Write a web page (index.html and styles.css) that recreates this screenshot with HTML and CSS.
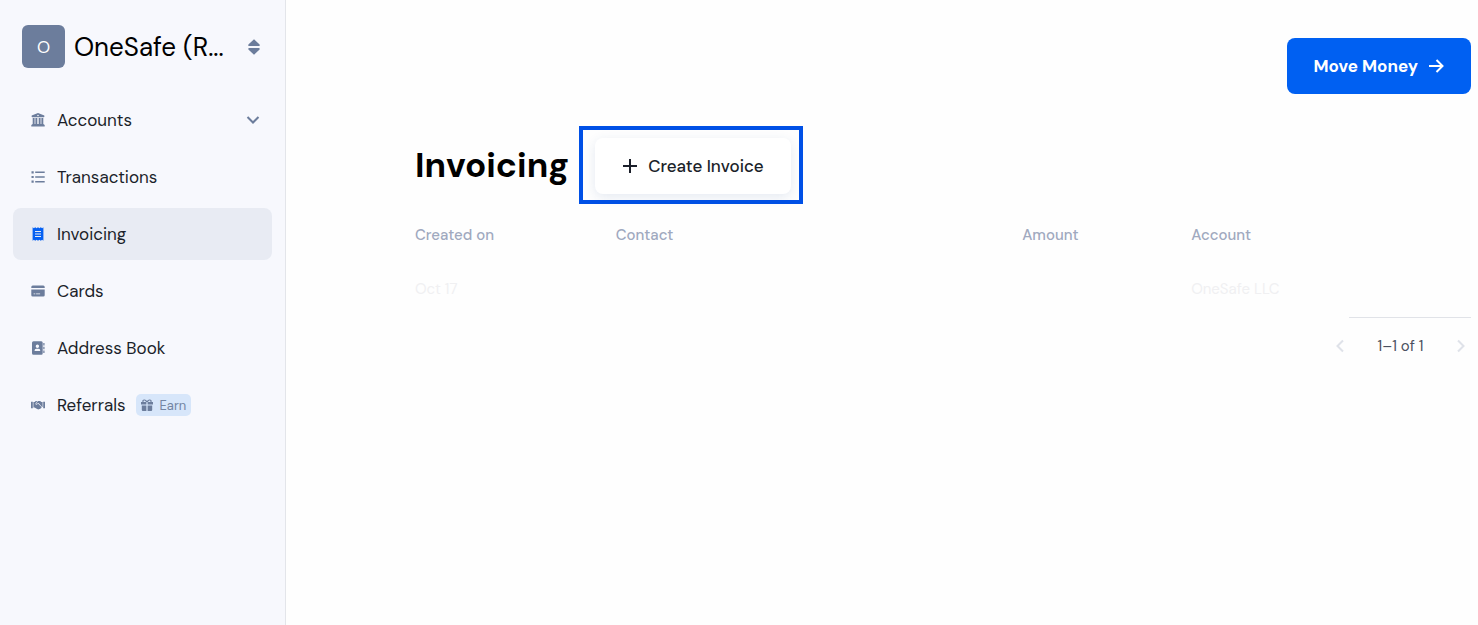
FILE: index.html
```html
<!DOCTYPE html>
<html lang="en">
<head>
    <meta charset="UTF-8">
    <meta name="viewport" content="width=device-width, initial-scale=1.0">
    <title>Invoicing - OneSafe</title>
    <link rel="stylesheet" href="styles.css">
</head>
<body>
    <div class="app">
        <aside class="sidebar">
            <button type="button" class="workspace">
                <span class="workspace-avatar">O</span>
                <span class="workspace-name">OneSafe (R...</span>
                <svg class="workspace-sort" viewBox="0 0 12 16" width="12" height="16" aria-hidden="true"><path d="M6 .3 11.6 5.4Q12.1 7 10.8 7H1.2Q-.1 7 .4 5.4ZM6 15.7 11.6 10.6Q12.1 9 10.8 9H1.2Q-.1 9 .4 10.6Z"/></svg>
            </button>

            <nav class="nav">
                <a href="#accounts" class="nav-link">
                    <svg class="nav-icon" viewBox="0 0 14 14" aria-hidden="true"><path fill-rule="evenodd" d="M7 0 13.3 2.6Q13.7 4.2 12.9 4.2H1.1Q.3 4.2.7 2.6ZM7 1.7a.8.8 0 1 0 0 1.6.8.8 0 0 0 0-1.6ZM1.7 5h1.9v6h.8V5h1.900v6h1.400V5h1.900v6h.8V5h1.900v6l1.400 1v1.500H.3V12l1.400-1Z"/></svg>
                    <span>Accounts</span>
                    <svg class="nav-chevron" viewBox="0 0 14 8" width="14" height="8" aria-hidden="true"><path d="m1.5 1 5.5 5.5L12.5 1"/></svg>
                </a>
                <a href="#transactions" class="nav-link">
                    <svg class="nav-icon" viewBox="0 0 14 14" aria-hidden="true"><path d="M.5 1.2h2.2v2.2H.5zM.5 5.9h2.2v2.2H.5zM.5 10.6h2.2v2.2H.5zM4.2 1.6h9.5v1.5H4.2zM4.2 6.3h9.5v1.5H4.2zM4.2 11h9.5v1.5H4.2z"/></svg>
                    <span>Transactions</span>
                </a>
                <a href="#invoicing" class="nav-link active" aria-current="page">
                    <svg class="nav-icon" viewBox="0 0 14 14" aria-hidden="true"><path fill-rule="evenodd" d="m1.6.3 1.3 1 1.3-1 1.4 1L7 .3l1.4 1 1.4-1 1.3 1 1.3-1v13.4l-1.3-1-1.3 1-1.4-1-1.4 1-1.4-1-1.4 1-1.3-1-1.3 1ZM4 4v.9h6V4Zm0 2.5v.9h6v-.9ZM4 9v.9h6V9Z"/></svg>
                    <span>Invoicing</span>
                </a>
                <a href="#cards" class="nav-link">
                    <svg class="nav-icon" viewBox="0 0 14 14" aria-hidden="true"><path fill-rule="evenodd" d="M1.7 1.6h10.6q1.4 0 1.4 1.5v.8H.3v-.8q0-1.5 1.4-1.5ZM.3 5.6h13.4v5.6q0 1.3-1.4 1.3H1.7q-1.4 0-1.4-1.3ZM2.6 9.4v.8h1.7v-.8Zm2.5 0v.8h4v-.8Z"/></svg>
                    <span>Cards</span>
                </a>
                <a href="#address-book" class="nav-link">
                    <svg class="nav-icon" viewBox="0 0 14 14" aria-hidden="true"><path fill-rule="evenodd" d="M2.5.3h7.8q1.4 0 1.4 1.5v10.4q0 1.5-1.4 1.5H2.5Q1 13.7 1 12.2V1.8Q1 .3 2.5.3ZM6.4 3.5a1.7 1.7 0 1 0 0 3.4 1.7 1.7 0 0 0 0-3.4ZM3.5 10h5.8q0-2.3-1.9-2.3h-2q-1.9 0-1.9 2.3ZM12.3 2h1.2v2.6h-1.2zM12.3 5.7h1.2v2.6h-1.2zM12.3 9.4h1.2V12h-1.2z"/></svg>
                    <span>Address Book</span>
                </a>
                <a href="#referrals" class="nav-link">
                    <svg class="nav-icon" viewBox="0 0 14 14" aria-hidden="true"><path d="M0 3.7h1.8v6.5H0zM12.2 3.7H14v6.5h-1.8zM2.4 4h1.2l1.2-.9h1.5L4.6 5.2q-.5 1.3.7 1.5L7.2 5.8l3.3 3.1q.3 1.1-.7 1.3-.5 1-1.3.8-1.3.9-2.3 0L3.5 9.4H2.4ZM7 3.1h2.1l1.3.9h1.2v5h-.5L7.5 5l-2 .9q-.6-.3-.1-1Z"/></svg>
                    <span>Referrals</span>
                    <span class="badge">
                        <svg viewBox="0 0 12 12" width="12" height="12" aria-hidden="true"><path fill-rule="evenodd" d="M1.5 3C.7 1.4 2 .2 3.5.4 4.7.5 5.4 1.3 6 2.1 6.6 1.3 7.3.5 8.5.4 10 .2 11.3 1.4 10.5 3H12v2.6H6.6V3H5.4v2.6H0V3Zm1.3 0h2.3C4.3 1.6 3.8 1.4 3.2 1.4c-.8.1-1 .9-.4 1.6Zm4.1 0h2.3c.6-.7.4-1.5-.4-1.6-.6 0-1.1.2-1.9 1.6ZM.8 6.5h4.6V12H1.9Q.8 12 .8 10.9Zm5.8 0h4.6v4.4q0 1.1-1.1 1.1H6.6Z"/></svg>
                        Earn
                    </span>
                </a>
            </nav>
        </aside>

        <main class="main">
            <div class="topbar">
                <button type="button" class="btn btn-primary">
                    Move Money
                    <svg viewBox="0 0 16 16" width="16" height="16" aria-hidden="true"><path d="M1 8h14M8.5 2l6 6-6 6"/></svg>
                </button>
            </div>

            <div class="page-header">
                <h1>Invoicing</h1>
                <div class="highlight">
                    <button type="button" class="btn btn-light">
                        <svg viewBox="0 0 16 16" width="16" height="16" aria-hidden="true"><path d="M8 1v14M1 8h14"/></svg>
                        Create Invoice
                    </button>
                </div>
            </div>

            <table class="invoices">
                <thead>
                    <tr>
                        <th class="col-date">Created on</th>
                        <th class="col-contact">Contact</th>
                        <th class="col-amount">Amount</th>
                        <th>Account</th>
                    </tr>
                </thead>
                <tbody>
                    <tr>
                        <td>Oct 17</td>
                        <td></td>
                        <td></td>
                        <td>OneSafe LLC</td>
                    </tr>
                </tbody>
            </table>

            <div class="table-footer">
                <hr class="divider">
                <div class="pagination">
                    <button type="button" class="page-btn" aria-label="Previous page">
                        <svg viewBox="0 0 8 14" width="8" height="14" aria-hidden="true"><path d="M7 1.5 1.5 7 7 12.5"/></svg>
                    </button>
                    <span>1–1 of 1</span>
                    <button type="button" class="page-btn" aria-label="Next page">
                        <svg viewBox="0 0 8 14" width="8" height="14" aria-hidden="true"><path d="M1 1.5 6.5 7 1 12.5"/></svg>
                    </button>
                </div>
            </div>
        </main>
    </div>
</body>
</html>
```
FILE: styles.css
```css
* {
    margin: 0;
    padding: 0;
    box-sizing: border-box;
}

body {
    font-family: 'DM Sans', Inter, sans-serif;
    font-size: 17px;
    color: #1b1f2a;
    background: #fefefe;
}

button {
    font: inherit;
    border: none;
    background: none;
    cursor: pointer;
}

.app {
    display: flex;
    min-height: 100vh;
}

/* Sidebar */
.sidebar {
    flex: 0 0 286px;
    padding: 24px 13px;
    background: #f7f8fd;
    border-right: 1px solid #e3e5ea;
}

.workspace {
    display: flex;
    align-items: center;
    width: 100%;
    padding: 1px 12px 0 9px;
    margin-bottom: 26px;
    text-align: left;
}

.workspace-avatar {
    display: flex;
    align-items: center;
    justify-content: center;
    width: 43px;
    height: 43px;
    margin-right: 9px;
    border-radius: 6px;
    background: #6c7d9c;
    color: white;
    font-size: 17px;
}

.workspace-name {
    flex: 1;
    font-size: 26px;
    line-height: 32px;
    color: black;
    white-space: nowrap;
}

.workspace-sort {
    fill: #6c7d9c;
}

.nav {
    display: flex;
    flex-direction: column;
    gap: 5px;
}

.nav-link {
    display: flex;
    align-items: center;
    height: 52px;
    padding: 0 12px 0 18px;
    border-radius: 8px;
    color: #1b1f2a;
    text-decoration: none;
}

.nav-link.active {
    background: #e8ebf3;
}

.nav-icon {
    width: 14px;
    height: 14px;
    margin-right: 12px;
    fill: #6c7d9c;
}

.active .nav-icon {
    fill: #0560f2;
}

.nav-chevron {
    margin-left: auto;
    fill: none;
    stroke: #6c7d9c;
    stroke-width: 2;
}

.badge {
    display: flex;
    align-items: center;
    gap: 7px;
    height: 22px;
    margin-left: 10px;
    padding: 0 5px;
    border-radius: 5px;
    background: #d7e6fa;
    color: #7485a3;
    font-size: 13px;
}

.badge svg {
    fill: #6c7d9c;
}

/* Main content */
.main {
    flex: 1;
    min-width: 0;
    padding: 38px 7px 24px 129px;
}

.topbar {
    display: flex;
    justify-content: flex-end;
    margin-bottom: 32px;
}

.btn {
    display: flex;
    align-items: center;
    gap: 10px;
    height: 56px;
    padding: 0 27px;
    border-radius: 8px;
}

.btn svg {
    fill: none;
    stroke: currentColor;
    stroke-width: 2;
}

.btn-primary {
    background: #0060f2;
    color: white;
    font-weight: 700;
}

.btn-light {
    background: white;
    color: #1b1f2a;
    font-weight: 500;
    box-shadow: 0 3px 12px rgba(40, 80, 150, 0.12);
}

.page-header {
    display: flex;
    align-items: center;
    gap: 10px;
}

.page-header h1 {
    font-size: 35px;
    font-weight: 700;
    line-height: 48px;
    color: black;
}

.highlight {
    padding: 8px 8px 6px 12px;
    border: 4px solid #0050e6;
}

.invoices {
    width: 100%;
    table-layout: fixed;
    border-collapse: collapse;
    font-size: 15px;
    line-height: 20px;
    text-align: left;
}

.invoices th {
    padding: 21px 0 12px;
    color: #a0a9bf;
    font-weight: 500;
}

.invoices td {
    padding: 22px 0 18px;
    color: #f0f0f2;
}

.col-date {
    width: 19%;
}

.col-contact {
    width: 38.5%;
}

.col-amount {
    width: 16%;
}

.table-footer {
    display: flex;
    flex-direction: column;
    align-items: flex-end;
}

.divider {
    width: 122px;
    border: none;
    border-top: 1px solid #e1e3e8;
}

.pagination {
    display: flex;
    align-items: center;
    justify-content: space-between;
    width: 135px;
    padding: 18px 6px 0 0;
    font-size: 15px;
    line-height: 20px;
    color: #4a5060;
}

.page-btn {
    display: flex;
}

.page-btn svg {
    fill: none;
    stroke: #dfe2e9;
    stroke-width: 2;
}
```
